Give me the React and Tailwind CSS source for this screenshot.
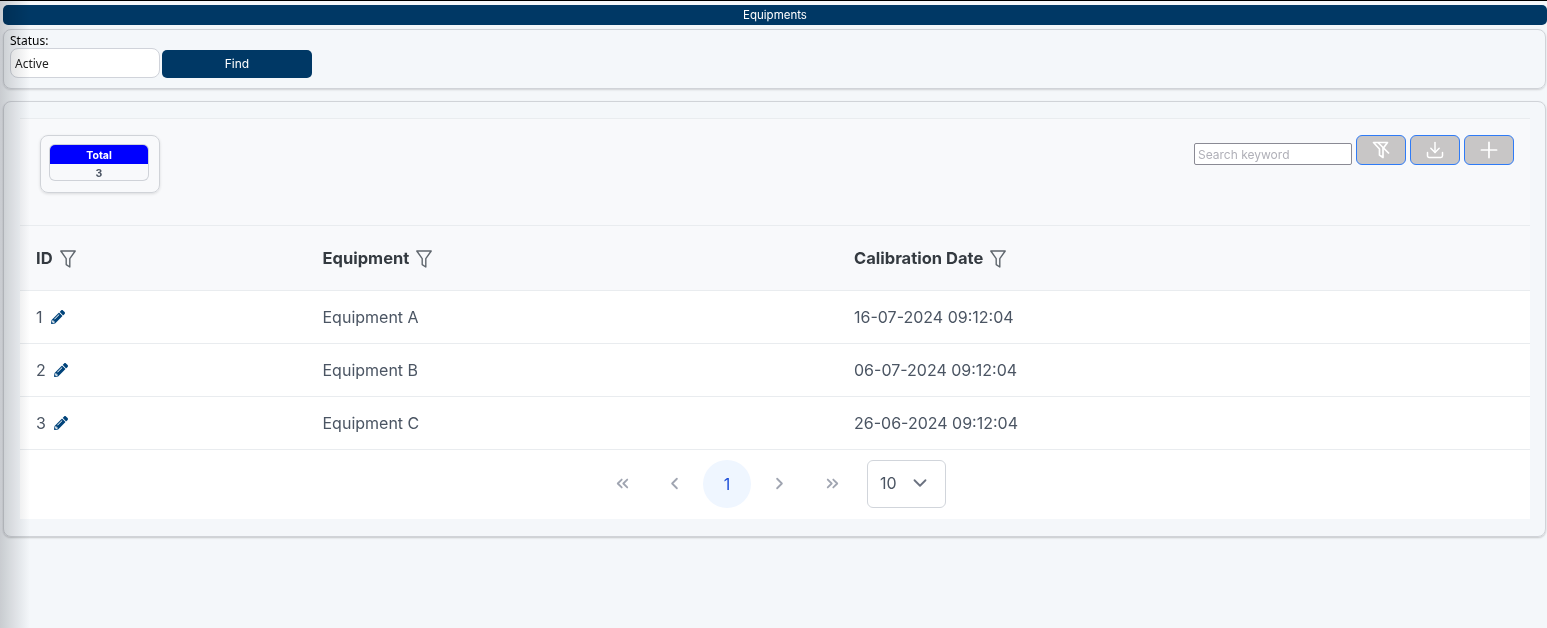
import { Download, Plus, ChevronsLeft, ChevronLeft, ChevronRight, ChevronsRight, ChevronDown } from 'lucide-react';
import { FaPencilAlt } from 'react-icons/fa';

const rows = [
  { id: 1, name: 'Equipment A', date: '16-07-2024 09:12:04' },
  { id: 2, name: 'Equipment B', date: '06-07-2024 09:12:04' },
  { id: 3, name: 'Equipment C', date: '26-06-2024 09:12:04' },
];

function FilterIcon() {
  return (
    <svg viewBox="0 0 16 18" className="w-4 h-[18px] text-[#5f666d]" fill="none" stroke="currentColor" strokeWidth="1.4" strokeLinejoin="round">
      <path d="M.8 1h14.4L9.8 8.6V17l-3.6-2.4V8.6L.8 1z" />
    </svg>
  );
}

function FilterSlashIcon() {
  return (
    <svg viewBox="0 0 18 18" className="w-[18px] h-[18px] text-white" fill="none" stroke="currentColor" strokeLinejoin="round">
      <path d="M1.5 1.5h14L11 7.5v9L7.5 14V8L1.5 1.5z" strokeWidth="1.7" />
      <path d="M6 1.5l11 11" strokeWidth="1.7" />
    </svg>
  );
}

function HeaderCell({ label, className }) {
  return (
    <div className={`flex items-center gap-[7px] pt-px ${className}`}>
      <span className="text-[16.5px] font-bold text-[#343a40]">{label}</span>
      <FilterIcon />
    </div>
  );
}

export default function App() {
  return (
    <div className="h-[628px] overflow-hidden bg-[#f4f7fa] font-['Inter',sans-serif] relative">
      <div className="absolute left-0 top-0 bottom-0 w-[30px] bg-gradient-to-r from-[#d2d3d5] to-white mix-blend-multiply z-10 pointer-events-none" />
      <div className="h-px bg-black" />
      <div className="pt-1 pl-[3px] flex flex-col">
        <div className="h-5 bg-[#003865] rounded-[5px] flex items-center justify-center pt-[2px] text-white text-[11.5px]">Equipments</div>
        <div className="mt-1 mr-px h-[60px] rounded-lg border border-[#d0d3d8] shadow-[0_1px_2px_rgba(0,0,0,0.15)] pl-[6px]">
          <div className="text-[12px] leading-[14px] pt-[4px] h-[18px] text-black font-['Noto_Sans',sans-serif]">Status:</div>
          <div className="flex items-start">
            <div className="w-[150px] h-[30px] rounded-lg bg-white border border-[#d0d3da] flex items-center pl-[4px] pt-px text-[12px] text-[#222] font-['Noto_Sans',sans-serif]">Active</div>
            <button className="ml-[2px] mt-[2px] w-[150px] h-[28px] rounded-[5px] bg-[#003865] text-white text-[12px]">Find</button>
          </div>
        </div>
        <div className="mt-3 mr-px h-[436px] rounded-lg border border-[#d0d3d8] shadow-[0_1px_2px_rgba(0,0,0,0.2)] pt-4 pl-4">
          <div className="w-[1510px] h-[401px] flex flex-col">
            <div className="h-[108px] bg-[#f8f9fb] border-t border-[#e9ecef] border-b flex justify-between items-start pt-4 pl-5 pr-4">
              <div className="w-[120px] h-[58px] rounded-lg border border-[#d0d3d8] shadow-[0_1px_3px_rgba(0,0,0,0.12)] pt-[9px] pl-[9px] pr-[11px]">
                <div className="h-[35px] rounded-[5px] shadow-[0_0_0_1px_#cfd2d8] overflow-hidden flex flex-col font-bold">
                  <div className="h-[19px] bg-[#0000ff] text-white text-[10.5px] pt-[3px] flex items-center justify-center">Total</div>
                  <div className="flex-1 text-[#4b5563] text-[10.5px] pt-[2px] flex items-center justify-center">3</div>
                </div>
              </div>
              <div className="flex items-start">
                <input readOnly placeholder="Search keyword" className="mt-2 w-[158px] h-[22px] bg-white border border-[#8a8a94] rounded-[2px] px-[3px] pt-px text-[12px] placeholder:text-[#b0b0b8] outline-none" />
                <button className="ml-1 w-[50px] h-[30px] rounded-[6px] bg-[#c8c6c6] border border-[#2f7bf6] flex items-center justify-center"><FilterSlashIcon /></button>
                <button className="ml-1 w-[50px] h-[30px] rounded-[6px] bg-[#c8c6c6] border border-[#2f7bf6] flex items-center justify-center text-white"><Download size={20} strokeWidth={1.8} /></button>
                <button className="ml-1 w-[50px] h-[30px] rounded-[6px] bg-[#c8c6c6] border border-[#2f7bf6] flex items-center justify-center text-white"><Plus size={26} strokeWidth={1.6} /></button>
              </div>
            </div>
            <div className="h-[65px] bg-[#f8f9fb] border-b border-[#e9ecef] flex items-center pl-4">
              <HeaderCell label="ID" className="w-[286.5px]" />
              <HeaderCell label="Equipment" className="w-[531.5px]" />
              <HeaderCell label="Calibration Date" />
            </div>
            {rows.map(r => (
              <div key={r.id} className="h-[53px] bg-white border-b border-[#e9ecef] flex items-center pl-4 text-[16px] text-[#4b5563]">
                <div className="w-[286.5px] flex items-center">{r.id}<FaPencilAlt size={14} className="ml-2 text-[#00437a]" /></div>
                <div className="w-[531.5px]">{r.name}</div>
                <div>{r.date}</div>
              </div>
            ))}
            <div className="flex-1 bg-white flex items-center justify-center pb-[2px] pr-[6px] text-[#a0a5b1]">
              <div className="flex gap-[4.5px]">
                <span className="w-12 h-12 flex items-center justify-center"><ChevronsLeft size={19} strokeWidth={2.3} /></span>
                <span className="w-12 h-12 flex items-center justify-center"><ChevronLeft size={19} strokeWidth={2.3} /></span>
                <span className="w-12 h-12 rounded-full bg-[#eff6ff] text-[#1d4ed8] text-[16px] flex items-center justify-center">1</span>
                <span className="w-12 h-12 flex items-center justify-center"><ChevronRight size={19} strokeWidth={2.3} /></span>
                <span className="w-12 h-12 flex items-center justify-center"><ChevronsRight size={19} strokeWidth={2.3} /></span>
              </div>
              <div className="ml-[11px] w-[79px] h-12 rounded-md border border-[#d1d5db] flex items-center justify-between pl-3 pr-[14px] pb-px text-[16px] text-[#4b5563]">
                10<ChevronDown size={22} className="text-[#6b7280]" />
              </div>
            </div>
          </div>
        </div>
      </div>
    </div>
  );
}
